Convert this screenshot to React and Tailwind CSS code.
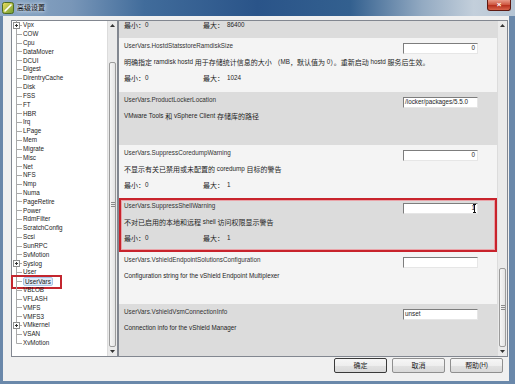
import React from "react";

// splits a string into CJK and latin runs so CJK gets the slightly bigger size
const CJK = /([\u2E80-\u9FFF\u3000-\u303F\uFF00-\uFFEF]+)/;

function T({ children }) {
  const parts = String(children).split(CJK);
  return parts.map((p, i) =>
    i % 2 === 1 ? (
      <span key={i} className="text-[7px] leading-none font-['Noto_Sans_CJK_SC',sans-serif]">
        {p}
      </span>
    ) : (
      <span key={i} className="whitespace-pre">{p}</span>
    )
  );
}

const treeItems = [
  ["Vpx", true], ["COW"], ["Cpu"], ["DataMover"], ["DCUI"], ["Digest"], ["DirentryCache"],
  ["Disk"], ["FSS"], ["FT"], ["HBR"], ["Irq"], ["LPage"], ["Mem"], ["Migrate"], ["Misc"],
  ["Net"], ["NFS"], ["Nmp"], ["Numa"], ["PageRetire"], ["Power"], ["RdmFilter"],
  ["ScratchConfig"], ["Scsi"], ["SunRPC"], ["SvMotion"], ["Syslog", true], ["User"],
  ["UserVars"], ["VBLOB"], ["VFLASH"], ["VMFS"], ["VMFS3"], ["VMkernel", true], ["VSAN"],
  ["XvMotion"],
];

const rows = [
  {
    h: "h-[54px]",
    name: "UserVars.HostdStatsstoreRamdiskSize",
    desc: "明确指定 ramdisk hostd 用于存储统计信息的大小 （MB，默认值为 0）。重新启动 hostd 服务后生效。",
    min: "0",
    max: "1024",
    value: "0",
    num: true,
  },
  {
    h: "h-[53px]",
    dark: true,
    name: "UserVars.ProductLockerLocation",
    desc: "VMware Tools 和 vSphere Client 存储库的路径",
    value: "/locker/packages/5.5.0",
  },
  {
    h: "h-[53px]",
    name: "UserVars.SuppressCoredumpWarning",
    desc: "不显示有关已禁用或未配置的 coredump 目标的警告",
    min: "0",
    max: "1",
    value: "0",
    num: true,
  },
  {
    h: "h-[54px]",
    dark: true,
    marked: true,
    name: "UserVars.SuppressShellWarning",
    desc: "不对已启用的本地和远程 shell 访问权限显示警告",
    min: "0",
    max: "1",
    value: "1",
    num: true,
    caret: true,
  },
  {
    h: "h-[52px]",
    name: "UserVars.VshieldEndpointSolutionsConfiguration",
    desc: "Configuration string for the vShield Endpoint Multiplexer",
    value: "",
  },
  {
    h: "h-[53px]",
    dark: true,
    name: "UserVars.VshieldVsmConnectionInfo",
    desc: "Connection info for the vShield Manager",
    value: "unset",
  },
];

function MinMax({ min, max }) {
  return (
    <div className="flex items-center text-[#1e1e1e] whitespace-nowrap">
      <div className="w-[79px] flex items-center">
        <T>最小：</T>
        <span>{min}</span>
      </div>
      <T>最大：</T>
      <span className="ml-[3px]">{max}</span>
    </div>
  );
}

function ScrollBar({ thumb }) {
  return (
    <div className="w-[10px] shrink-0 flex flex-col bg-[#eaeaea] border-l border-[#dcdcdc]">
      <div className="h-[9px] flex items-center justify-center">
        <svg width="5" height="3">
          <path d="M0 3 L2.5 0 L5 3Z" fill="#333" />
        </svg>
      </div>
      <div className="flex-1 flex flex-col px-[1px]">
        <div
          className={`${thumb} rounded-[2px] border border-[#9b9b9b] bg-[linear-gradient(90deg,#f6f6f6,#e4e4e4)] flex flex-col items-center justify-center gap-[1px]`}
        >
          <div className="w-[4px] h-px bg-[#8a8a8a]" />
          <div className="w-[4px] h-px bg-[#8a8a8a]" />
          <div className="w-[4px] h-px bg-[#8a8a8a]" />
        </div>
      </div>
      <div className="h-[9px] flex items-center justify-center">
        <svg width="5" height="3">
          <path d="M0 0 L2.5 3 L5 0Z" fill="#333" />
        </svg>
      </div>
    </div>
  );
}

function TreeItem({ name, expand, last, selected }) {
  return (
    <div className="relative flex items-center h-[8.83px]">
      <svg width="10" height="9" className="shrink-0 overflow-visible">
        <line x1="4.5" y1="-1" x2="4.5" y2={last ? 4.5 : 10} stroke="#a9a9a9" />
        <line x1="4.5" y1="4.5" x2="10" y2="4.5" stroke="#a9a9a9" />
        {expand && (
          <>
            <rect x="1.5" y="1.5" width="6" height="6" fill="#fbfbfb" stroke="#8e8e8e" />
            <line x1="3" y1="4.5" x2="6" y2="4.5" stroke="#333" />
            <line x1="4.5" y1="3" x2="4.5" y2="6" stroke="#333" />
          </>
        )}
      </svg>
      {selected ? (
        <span className="ml-px px-px bg-[#dfeaf7] border border-[#a7c5e8] rounded-[2px] leading-[7px]">
          {name}
        </span>
      ) : (
        <span className="ml-[1px]">{name}</span>
      )}
      {selected && (
        <div className="absolute left-[-1px] top-[-2px] w-[51px] h-[14px] border-2 border-[#c3262f]" />
      )}
    </div>
  );
}

export default function App() {
  return (
    <div className="w-[515px] h-[384px] overflow-hidden flex flex-col bg-[#6a88aa] font-['Liberation_Sans','Noto_Sans_CJK_SC',sans-serif] text-[6.3px] leading-none text-[#1e1e1e]">
      {/* title bar */}
      <div className="h-[16px] shrink-0 flex items-start bg-[linear-gradient(90deg,#8da8c5_0%,#7896b8_14%,#416c9b_28%,#2a5489_50%,#33608f_68%,#93aac2_82%,#c3cfdb_92%,#b6c5d4_100%)]">
        <svg width="12" height="12" viewBox="0 0 12 12" className="ml-[2px] mt-[2px]">
          <defs>
            <linearGradient id="ic" x1="0" y1="0" x2="1" y2="1">
              <stop offset="0" stopColor="#f0e060" />
              <stop offset="1" stopColor="#6e9a30" />
            </linearGradient>
          </defs>
          <rect x="0.5" y="0.5" width="11" height="11" rx="2" fill="url(#ic)" stroke="#4d6a22" />
          <path d="M3 9 L9 3" stroke="#fff" strokeWidth="1.6" strokeLinecap="round" />
          <path d="M3 9 L4.5 9 L3 7.5Z" fill="#fff" />
        </svg>
        <div className="ml-[3px] h-[14px] flex items-center text-[#111] [text-shadow:0_0_3px_#e8eef5,0_0_5px_#dfe7f0]">
          <T>高级设置</T>
        </div>
        <div className="flex-1" />
        <div className="mr-[4px] w-[24px] h-[11px] rounded-b-[3px] border border-t-0 border-[#5e1a12] bg-[linear-gradient(180deg,#e89a88_0%,#cf5a44_45%,#b8321f_55%,#d8634a_100%)] flex items-center justify-center text-white font-bold text-[8px]">
          ×
        </div>
      </div>

      {/* client area */}
      <div className="flex-1 ml-[3px] mr-[6px] mb-[3px] bg-[#f0f0f0] flex flex-col">
        <div className="h-[341px] pt-[4px] pl-[8px] flex">
          {/* tree */}
          <div className="w-[107px] h-[337px] border border-[#828790] bg-white flex">
            <div className="flex-1 flex flex-col text-[#1c1c1c]">
              {treeItems.map(([n, exp], i) => (
                <TreeItem
                  key={n}
                  name={n}
                  expand={exp}
                  last={i === treeItems.length - 1}
                  selected={n === "UserVars"}
                />
              ))}
            </div>
            <ScrollBar thumb="mt-[32px] h-[285px]" />
          </div>

          {/* settings list */}
          <div className="w-[390px] h-[337px] border border-[#828790] bg-white flex">
            <div className="flex-1 flex flex-col overflow-hidden">
              <div className="h-[17px] shrink-0 bg-[#dcdcdc] pl-[5px]">
                <div className="h-[8px] flex items-center">
                  <MinMax min="0" max="86400" />
                </div>
              </div>
              {rows.map((r) => (
                <div
                  key={r.name}
                  className={`${r.h} shrink-0 flex items-start pl-[5px] pr-[19px] ${
                    r.dark ? "bg-[#dcdcdc]" : "bg-[#f4f4f4]"
                  } ${r.marked ? "shadow-[inset_0_0_0_2px_#c8232c,inset_0_0_0_3px_#e9a3a8]" : ""}`}
                >
                  <div className="flex-1 min-w-0 flex flex-col whitespace-nowrap">
                    <div className="h-[16px] flex items-center text-[#333]">{r.name}</div>
                    <div className="h-[16px] flex items-center">
                      <T>{r.desc}</T>
                    </div>
                    {r.min && (
                      <div className="h-[16px] flex items-center">
                        <MinMax min={r.min} max={r.max} />
                      </div>
                    )}
                  </div>
                  <div
                    className={`mt-[5px] w-[75px] h-[11px] shrink-0 bg-white border border-t-[#7d7d7d] border-l-[#7d7d7d] border-r-[#e6e6e6] border-b-[#e6e6e6] flex items-center px-[1px] ${
                      r.num ? "justify-end" : "justify-start"
                    }`}
                  >
                    <span className="mr-[1px]">{r.value}</span>
                    {r.caret && (
                      <svg width="3" height="9" className="-ml-[3px]">
                        <path d="M0 0.5 H3 M1.5 0.5 V8.5 M0 8.5 H3" stroke="#111" strokeWidth="1" />
                      </svg>
                    )}
                  </div>
                </div>
              ))}
            </div>
            <ScrollBar thumb="mt-[238px] h-[79px]" />
          </div>
        </div>

        {/* buttons */}
        <div className="flex justify-end gap-[5px] pr-[6px] pt-[1px]">
          {["确定", "取消", "帮助(H)"].map((b, i) => (
            <div
              key={b}
              className={`w-[53px] h-[15px] rounded-[2px] border flex items-center justify-center text-[#222] bg-[linear-gradient(180deg,#f6f6f6_0%,#eeeeee_50%,#e2e2e2_51%,#d9d9d9_100%)] ${
                i === 0 ? "border-[#3a3a3a]" : "border-[#8f8f8f]"
              }`}
            >
              <T>{b}</T>
            </div>
          ))}
        </div>
      </div>
    </div>
  );
}
